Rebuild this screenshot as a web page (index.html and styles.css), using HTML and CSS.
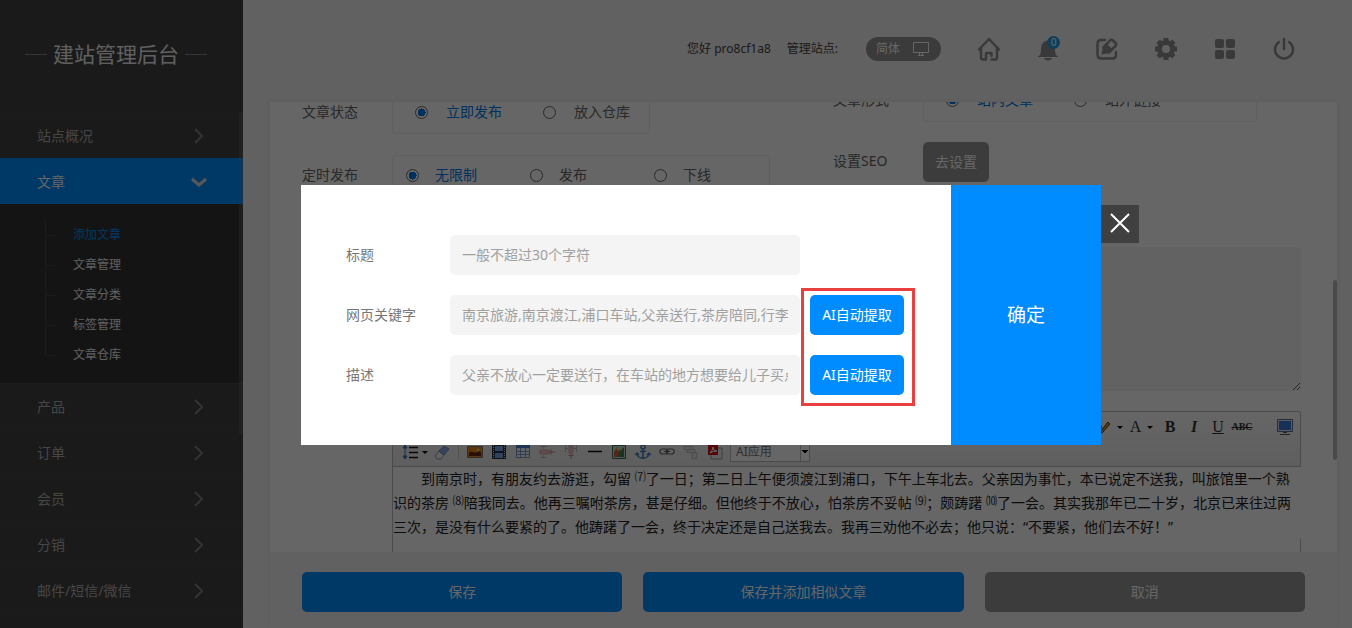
FILE: index.html
```html
<!DOCTYPE html>
<html lang="zh-CN">
<head>
<meta charset="utf-8">
<title>建站管理后台</title>
<link rel="stylesheet" href="styles.css">
</head>
<body>
<div class="app">
  <aside class="sidebar">
    <div class="brand"><span class="brand-name">建站管理后台</span></div>
    <nav class="menu">
      <a class="menu-item" href="#">站点概况<svg class="chev" viewBox="0 0 16 16"><path d="M4 1l7 7-7 7"/></svg></a>
      <a class="menu-item active" href="#">文章<svg class="chev" viewBox="0 0 16 16"><path d="M1 5l7 6 7-6"/></svg></a>
      <ul class="submenu">
        <li><a class="current" href="#">添加文章</a></li>
        <li><a href="#">文章管理</a></li>
        <li><a href="#">文章分类</a></li>
        <li><a href="#">标签管理</a></li>
        <li><a href="#">文章仓库</a></li>
      </ul>
      <a class="menu-item" href="#">产品<svg class="chev" viewBox="0 0 16 16"><path d="M4 1l7 7-7 7"/></svg></a>
      <a class="menu-item" href="#">订单<svg class="chev" viewBox="0 0 16 16"><path d="M4 1l7 7-7 7"/></svg></a>
      <a class="menu-item" href="#">会员<svg class="chev" viewBox="0 0 16 16"><path d="M4 1l7 7-7 7"/></svg></a>
      <a class="menu-item" href="#">分销<svg class="chev" viewBox="0 0 16 16"><path d="M4 1l7 7-7 7"/></svg></a>
      <a class="menu-item" href="#">邮件/短信/微信<svg class="chev" viewBox="0 0 16 16"><path d="M4 1l7 7-7 7"/></svg></a>
      <span class="menu-item"></span>
      <i class="menu-thumb"></i>
    </nav>
  </aside>

  <main class="main">
    <header class="topbar">
      <span class="hello">您好 pro8cf1a8</span>
      <span class="site">管理站点:</span>
      <button class="lang" type="button">简体
        <svg viewBox="0 0 16 14"><path d="M.5.5h15v10H.5zM5 13.5h6M6.500 10.500v3M9.500 10.500v3"/></svg>
      </button>
      <div class="tools">
        <a href="#" aria-label="首页"><svg class="line" viewBox="0 0 24 24"><path d="M2 12.500L12 2l10 10.500M4 11.500v9q0 2 2 2h3v-5.500q0-1 1-1h4.500v3M20 11.500v9q0 2-2 2h-3.500"/></svg></a>
        <a href="#" aria-label="消息"><svg viewBox="0 0 24 24"><path d="M1.500 20c3-2 3.500-4 3.500-8C5 7 8 3.500 12 3.500s7 3.500 7 8.500c0 4 .500 6 3.500 8zM8 21h8q-1 2.500-4 2.500T8 21z"/></svg><span class="badge">0</span></a>
        <a href="#" aria-label="编辑"><svg viewBox="0 0 24 24"><path class="pen" d="M10 3H6Q2.500 3 2.500 6.500v11Q2.500 21.500 6.500 21.500h11q3.500 0 3.500-4V15"/><path class="pen" d="M8.500 10.500L15 3.500q1.500-1.500 3 0l2.500 2.500q1.500 1.500 0 3L14 15.500"/><path d="M6.500 17.500l1.500-8.500 7.500 7z"/><path d="M8 9l3-3 7 7-3 3z"/></svg></a>
        <a href="#" aria-label="设置"><svg class="gear" viewBox="0 0 24 24"><circle cx="12" cy="12" r="6.500"/><path d="M12 1v3M12 20v3M1 12h3M20 12h3M4.200 4.200l2.200 2.200M17.600 17.600l2.200 2.200M4.200 19.800l2.200-2.200M17.600 6.400l2.200-2.200"/></svg></a>
        <a href="#" aria-label="应用"><svg viewBox="0 0 24 24"><rect x="2" y="2" width="9" height="9" rx="2"/><rect x="13" y="2" width="9" height="9" rx="2"/><rect x="2" y="13" width="9" height="9" rx="2"/><rect x="13" y="13" width="9" height="9" rx="2"/></svg></a>
        <a href="#" aria-label="退出"><svg class="line" viewBox="0 0 24 24"><path d="M12 2v10M7 5a9 9 0 1010 0"/></svg></a>
      </div>
    </header>

    <div class="sheet">
      <div class="viewport">
        <form class="form">
          <div class="columns">
            <div class="col left">
              <div class="field"><span class="label">文章状态</span>
                <div class="radios wide state">
                  <label class="on"><input type="radio" name="state" checked>立即发布</label>
                  <label><input type="radio" name="state">放入仓库</label>
                </div>
              </div>
              <div class="field"><span class="label">定时发布</span>
                <div class="radios timing">
                  <label class="on"><input type="radio" name="timing" checked>无限制</label>
                  <label><input type="radio" name="timing">发布</label>
                  <label><input type="radio" name="timing">下线</label>
                </div>
              </div>
            </div>
            <div class="col">
              <div class="field"><span class="label">文章形式</span>
                <div class="radios wide kind">
                  <label class="on"><input type="radio" name="kind" checked>站内文章</label>
                  <label><input type="radio" name="kind">站外链接</label>
                </div>
              </div>
              <div class="field"><span class="label">设置SEO</span><button class="btn gray small" type="button">去设置</button></div>
            </div>
          </div>

          <div class="body-col">
            <textarea class="summary" aria-label="文章摘要"></textarea>
            <div class="editor">
              <div class="toolbar">
                <div class="tool-row right">
                  <button type="button" class="t drop" aria-label="背景色"><svg viewBox="0 0 16 16"><path d="M5 13L13 3l2 2-8 9z" fill="#d9903a" stroke="#5a3b12"/><circle cx="4" cy="8" r="2" fill="none" stroke="#111" stroke-width="1.500"/></svg><i class="caret"></i></button>
                  <button type="button" class="t drop serif">A<i class="caret"></i></button>
                  <button type="button" class="t serif bold">B</button>
                  <button type="button" class="t serif bold ital">I</button>
                  <button type="button" class="t serif under">U</button>
                  <button type="button" class="t serif strike">ABC</button>
                  <button type="button" class="t screen" aria-label="全屏"><svg viewBox="0 0 16 16"><path d="M.5.5h15v12H.5z" fill="#dce6f4" stroke="#5a7092"/><path d="M2 2h12v9H2z" fill="#3d78d8"/><path d="M6 13.500h4M3 15.500h10" stroke="#555"/></svg></button>
                </div>
                <div class="tool-row">
                  <button type="button" class="t drop first" aria-label="行距"><svg viewBox="0 0 16 16"><path d="M3 1v14M1 4l2-3 2 3zM1 12l2 3 2-3z" stroke="#3b78b8" fill="#3b78b8"/><path d="M7 3.500h9M7 8.500h9M7 13.500h9" stroke="#111" stroke-width="1.500"/></svg><i class="caret"></i></button>
                  <button type="button" class="t" aria-label="清除格式"><svg viewBox="0 0 16 16"><path d="M1 12l4-5 5 4-3 4H3z" fill="#f2f5fa" stroke="#8995aa"/><path d="M5 7l5-5 5 3-5 6z" fill="#86aee0" stroke="#6889b5"/></svg></button>
                  <i class="sep"></i>
                  <button type="button" class="t" aria-label="图片"><svg viewBox="0 0 16 16"><path d="M.5 2.500h15v11H.5z" fill="#e58a22" stroke="#777"/><path d="M2 9c3-3 5 1 8-1s3 0 4 0v4H2z" fill="#6b2c08"/><circle cx="11" cy="6" r="1.500" fill="#ffd24a"/></svg></button>
                  <button type="button" class="t" aria-label="视频"><svg viewBox="0 0 16 16"><path d="M1 1h14v14H1z" fill="#23324d"/><path d="M4 2h8v5H4zM4 9h8v5H4z" fill="#7ba5e0"/><path d="M2.500 1v14M13.500 1v14" stroke="#ddd" stroke-dasharray="1 1"/></svg></button>
                  <button type="button" class="t" aria-label="表格"><svg viewBox="0 0 16 16"><path d="M1.500 1.500h13v12h-13z" fill="#f3f7fc" stroke="#7b9bc8"/><path d="M1 1h14v3H1z" fill="#4b83ce"/><path d="M1 7.500h14M1 10.500h14M5.500 4v10M10.500 4v10" stroke="#7b9bc8"/></svg></button>
                  <button type="button" class="t faded" aria-label="插入行"><svg viewBox="0 0 16 16" fill="none" stroke="#999"><path d="M1 2.500h7M1 13.500h7M4.500 2v3M4.500 11v3"/><path d="M1 6h9v4H1z" fill="#e8a0a8" stroke="#c07880"/><path d="M10 8h6M12 5.500v5" stroke="#b03a48"/></svg></button>
                  <button type="button" class="t faded" aria-label="插入列"><svg viewBox="0 0 16 16" fill="none" stroke="#999"><path d="M2.500 1v7M13.500 1v7M2 4.500h3M11 4.500h3"/><path d="M6 1h4v8H6z" fill="#e8a0a8" stroke="#c07880"/><path d="M8 9v6M5.500 11.500h5" stroke="#b03a48"/></svg></button>
                  <button type="button" class="t" aria-label="分隔线"><svg viewBox="0 0 16 16"><path d="M1 7.500h14" stroke="#111" stroke-width="1.500"/></svg></button>
                  <button type="button" class="t" aria-label="图集"><svg viewBox="0 0 16 16"><path d="M1.500 1.500h13v13h-13z" fill="#bfe0d0" stroke="#3f7358"/><path d="M3 8l3-5 3 2-1 8H3z" fill="#d05f3d"/><path d="M8 8l5-5v10H7z" fill="#3d8654"/><circle cx="7" cy="5" r="1.500" fill="#f2d25b"/></svg></button>
                  <button type="button" class="t" aria-label="锚点"><svg viewBox="0 0 16 16" fill="none" stroke="#4580bd" stroke-width="1.500"><circle cx="8" cy="3" r="2"/><path d="M8 5v9M5 7.500h6M0 11l2-2 2 2M12 11l2-2 2 2M2 9c0 7 12 7 12 0"/></svg></button>
                  <button type="button" class="t" aria-label="链接"><svg viewBox="0 0 16 16" fill="none" stroke="#666" stroke-width="1.200"><rect x=".8" y="5" width="8" height="5" rx="2.500"/><rect x="7.200" y="5" width="8" height="5" rx="2.500"/><path d="M5 7.500h6"/></svg></button>
                  <button type="button" class="t faded" aria-label="取消链接"><svg viewBox="0 0 16 16" fill="#ddd" stroke="#999"><path d="M1 2.500h9v3H1zM4 5.500h8v3H4zM9 8.500h5v6H9z"/></svg></button>
                  <button type="button" class="t" aria-label="PDF"><svg viewBox="0 0 16 16"><path d="M6 4h9v11H4v-4" fill="#eee" stroke="#999"/><path d="M1 1h10v10H1z" fill="#d10d12"/><path d="M3 9q3-3 3-6 0 4 4 4-4 0-7 2z" fill="none" stroke="#fff"/></svg></button>
                  <select class="ai-select" aria-label="AI应用"><option>AI应用</option></select>
                </div>
              </div>
              <article class="content">
                <p>到南京时，有朋友约去游逛，勾留 <sup>⑺</sup>了一日；第二日上午便须渡江到浦口，下午上车北去。父亲因为事忙，本已说定不送我，叫旅馆里一个熟识的茶房 <sup>⑻</sup>陪我同去。他再三嘱咐茶房，甚是仔细。但他终于不放心，怕茶房不妥帖 <sup>⑼</sup>；颇踌躇 <sup>⑽</sup>了一会。其实我那年已二十岁，北京已来往过两三次，是没有什么要紧的了。他踌躇了一会，终于决定还是自己送我去。我再三劝他不必去；他只说：“不要紧，他们去不好！”</p>
              </article>
              <div class="editor-foot"></div>
            </div>
          </div>
        </form>
        <i class="sheet-thumb"></i>
      </div>
      <footer class="actions">
        <button class="btn" type="button">保存</button>
        <button class="btn" type="button">保存并添加相似文章</button>
        <button class="btn gray" type="button">取消</button>
      </footer>
    </div>
  </main>
</div>

<div class="overlay">
  <section class="dialog" role="dialog" aria-label="设置SEO">
    <div class="dialog-form">
      <div class="row"><label for="seo-title">标题</label><input id="seo-title" type="text" placeholder="一般不超过30个字符"></div>
      <div class="row"><label for="seo-keys">网页关键字</label><input id="seo-keys" type="text" value="南京旅游,南京渡江,浦口车站,父亲送行,茶房陪同,行李照看"><button class="btn ai" type="button">AI自动提取</button></div>
      <div class="row"><label for="seo-desc">描述</label><input id="seo-desc" type="text" value="父亲不放心一定要送行，在车站的地方想要给儿子买点橘子"><button class="btn ai" type="button">AI自动提取</button></div>
      <i class="frame"></i>
    </div>
    <button class="confirm" type="button">确定</button>
    <button class="close" type="button" aria-label="关闭"><svg viewBox="0 0 20 20"><path d="M1 1l18 18M19 1L1 19"/></svg></button>
  </section>
</div>
</body>
</html>
```

FILE: styles.css
```css
* { box-sizing: border-box; }

body {
  margin: 0;
  height: 100vh;
  overflow: hidden;
  font: 14px/20px "Noto Sans", "Noto Sans CJK SC", sans-serif;
  color: #666;
  background: #f2f2f2;
}

a { color: inherit; text-decoration: none; }
button, input, select, textarea { font: inherit; color: inherit; }
button { border: 0; padding: 0; background: none; }

.app { display: flex; height: 100vh; }

/* Sidebar */
.sidebar {
  flex: none;
  width: 243px;
  overflow: hidden;
  background: #414141;
}

.brand {
  display: flex;
  align-items: center;
  gap: 6px;
  height: 112px;
  padding: 0 36px 4px 25px;
  color: #eee;
}
.brand::before, .brand::after {
  content: "";
  flex: 1;
  height: 1px;
  background: #888;
}
.brand-name { font-size: 21px; line-height: 28px; }

.menu { position: relative; }
.menu-item {
  display: flex;
  align-items: center;
  justify-content: space-between;
  height: 46px;
  padding: 0 36px 0 37px;
  border-top: 1px solid #484848;
  color: #b0b0b0;
}
.menu-item.active { background: #008cff; border-color: #008cff; color: #fff; }
.chev { width: 16px; height: 16px; fill: none; stroke: #808080; stroke-width: 2; }
.active .chev { stroke: #ddd; stroke-width: 3; }
.menu-thumb {
  position: absolute;
  top: 0;
  right: 0;
  width: 4px;
  height: 322px;
  background: rgba(128, 128, 128, .3);
}

.submenu {
  position: relative;
  margin: 0;
  padding: 16px 0 13px 45px;
  list-style: none;
  font-size: 12px;
  line-height: 30px;
  color: #eee;
  background: #333;
}
.submenu::before {
  content: "";
  position: absolute;
  top: 15px;
  bottom: 28px;
  left: 45px;
  border-left: 1px solid #484848;
}
.submenu li { display: flex; align-items: center; gap: 18px; }
.submenu li::before { content: ""; width: 10px; height: 1px; background: #484848; }
.submenu .current { color: #008cff; }

/* Top bar */
.main { flex: 1; min-width: 0; display: flex; flex-direction: column; }
.topbar {
  flex: none;
  display: flex;
  align-items: center;
  justify-content: flex-end;
  height: 102px;
  padding: 0 56px 4px 0;
  font-size: 12px;
  color: #444;
}
.hello { margin-right: 16px; }
.site { margin-right: 28px; }
.lang {
  display: flex;
  align-items: center;
  justify-content: space-between;
  width: 75px;
  height: 24px;
  margin-right: 36px;
  padding: 0 12px 0 10px;
  border-radius: 12px;
  background: #949494;
  color: #fff;
}
.lang svg { width: 16px; height: 14px; fill: none; stroke: #fff; }
.tools { display: flex; gap: 35px; }
.tools a { position: relative; display: block; height: 24px; }
.tools svg { width: 24px; height: 24px; fill: #909090; }
.tools .line { fill: none; stroke: #909090; stroke-width: 2.500; stroke-linejoin: round; stroke-linecap: round; }
.tools .pen { fill: none; stroke: #909090; stroke-width: 2.500; stroke-linecap: round; }
.tools .gear { fill: none; stroke: #909090; stroke-width: 5; }
.badge {
  position: absolute;
  top: -1px;
  right: 0;
  width: 13px;
  height: 13px;
  border-radius: 7px;
  font-size: 10px;
  line-height: 13px;
  text-align: center;
  color: #fff;
  background: #20a0e0;
}

/* Sheet */
.sheet {
  flex: 1;
  min-height: 0;
  display: flex;
  flex-direction: column;
  margin: 0 15px 0 27px;
  box-shadow: 0 0 5px rgba(0, 0, 0, .08);
}
.viewport { position: relative; flex: 1; min-height: 0; overflow: hidden; background: #fff; }
.form { margin-top: -22px; padding: 0 36px 0 32px; }
.sheet-thumb {
  position: absolute;
  right: 0;
  top: 178px;
  width: 4px;
  height: 180px;
  border-radius: 2px;
  background: #b8b8b8;
}

.columns { display: grid; grid-template-columns: 531fr 468fr; }
.col { display: flex; flex-direction: column; gap: 20px; }
.col.left { padding-top: 12px; gap: 21px; }
.field { display: flex; align-items: center; }
.label { flex: none; width: 90px; padding-bottom: 2px; }
.radios {
  display: flex;
  align-items: center;
  height: 42px;
  padding: 0 0 2px 13px;
  border: 1px solid #eee;
  border-radius: 4px;
}
.radios.wide { padding-left: 22px; }
.state { width: 258px; }
.timing { width: 378px; }
.kind { width: 334px; }
.radios label { flex: none; display: flex; align-items: center; gap: 16px; width: 124px; }
.radios.wide label { gap: 18px; width: 128px; }
.radios .on { color: #0078e8; }
.radios input {
  appearance: none;
  flex: none;
  width: 13px;
  height: 13px;
  margin: 0;
  border: 1px solid #666;
  border-radius: 50%;
}
.radios input:checked { background: radial-gradient(circle, #0078e8 4px, #fff 4px); }

.btn {
  height: 40px;
  border-radius: 5px;
  color: #fff;
  background: #008cff;
}
.btn.gray { background: #979797; }
.btn.small { width: 66px; }

/* Editor */
.body-col { padding: 50px 0 0 90px; }
.summary {
  display: block;
  width: 100%;
  height: 144px;
  border: 0;
  border-radius: 4px;
  background: #f4f4f4;
}
.editor { margin-top: 20px; border-left: 1px solid #bbb; }
.toolbar {
  display: grid;
  gap: 1px;
  padding: 3px 3px 2px 0;
  border: 1px solid #bbb;
  border-left: 0;
  border-radius: 0 3px 0 0;
  background: linear-gradient(#fff, #ececec);
}
.tool-row { display: flex; align-items: center; height: 24px; padding-left: 7px; }
.tool-row.right { justify-content: flex-end; }
.t { display: flex; align-items: center; justify-content: center; width: 24px; height: 24px; color: #333; }
.t svg { width: 16px; height: 16px; }
.t.drop { width: 33px; gap: 6px; }
.t.first { width: 30px; gap: 4px; }
.t.faded { opacity: .6; }
.caret { border: 3px solid transparent; border-top-color: #000; border-bottom: 0; }
.serif { font-family: "Liberation Serif", serif; font-size: 16px; }
.bold { font-weight: 700; }
.ital { font-style: italic; }
.under { text-decoration: underline; }
.strike { font-size: 10px; font-weight: 700; text-decoration: line-through; }
.screen { margin-left: 19px; }
.sep { width: 1px; height: 16px; margin: 0 4px; background: #ccc; }
.ai-select {
  appearance: none;
  width: 80px;
  height: 20px;
  margin-left: 3px;
  padding: 0 5px;
  border: 1px solid #bbb;
  border-radius: 0;
  font-size: 12px;
  line-height: 16px;
  color: #777;
  background:
    conic-gradient(from -45deg at 50% 100%, #000 90deg, transparent 0) 71px 7px / 6px 3px no-repeat,
    linear-gradient(#bbb, #bbb) 69px 0 / 1px 100% no-repeat,
    #fff;
}
.content { color: #222; line-height: 24px; }
.content p { margin: 0; text-indent: 28px; }
.content sup { font-size: 11px; line-height: 0; vertical-align: 3px; }
.editor-foot { height: 80px; border-right: 1px solid #bbb; }

.actions {
  flex: none;
  display: grid;
  grid-template-columns: repeat(3, 1fr);
  gap: 21px;
  padding: 20px 32px 16px;
  background: #f2f2f2;
}

/* Dialog */
.overlay {
  position: fixed;
  inset: 0;
  display: flex;
  align-items: center;
  justify-content: center;
  padding: 2px 0 0 50px;
  background: rgba(0, 0, 0, .6);
}
.dialog { position: relative; display: flex; width: 800px; background: #fff; }
.dialog-form {
  position: relative;
  flex: 1;
  display: flex;
  flex-direction: column;
  gap: 20px;
  padding: 50px 45px;
  color: #777;
}
.row { display: flex; align-items: center; }
.row label { flex: none; width: 104px; }
.row input {
  width: 350px;
  height: 40px;
  padding: 0 12px 2px;
  border: 0;
  border-radius: 5px;
  color: #a0a0a0;
  background: #f4f4f4;
}
.row input::placeholder { color: #a0a0a0; }
.ai { width: 94px; margin-left: 10px; }
.frame {
  position: absolute;
  top: 103px;
  right: 36px;
  width: 114px;
  height: 118px;
  border: 3px solid #e84040;
  pointer-events: none;
}
.confirm { width: 150px; font-size: 19px; color: #fff; background: #008cff; }
.close {
  position: absolute;
  top: 20px;
  left: 100%;
  display: grid;
  place-items: center;
  width: 38px;
  height: 38px;
  padding-bottom: 2px;
  background: #404040;
}
.close svg { width: 20px; height: 20px; fill: none; stroke: #fff; stroke-width: 2; }
```
